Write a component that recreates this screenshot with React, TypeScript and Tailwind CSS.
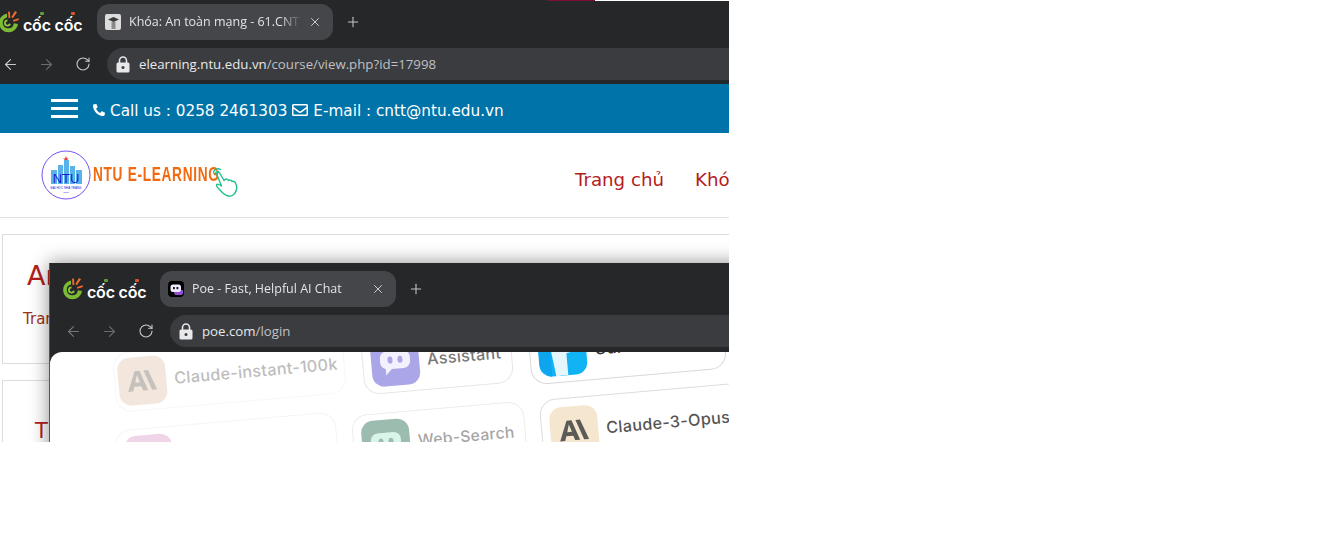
import { FaPhone, FaRegEnvelope } from 'react-icons/fa';
import { ArrowLeft, ArrowRight, Plus, RotateCw, X } from 'lucide-react';

const uiFont = "font-['Open_Sans','Noto_Sans',sans-serif]";
const pageFont = "font-['DejaVu_Sans',sans-serif]";

function CocCocLogo() {
  return (
    <div className="flex items-center">
      <svg width="22" height="22" viewBox="0 0 22 22" className="-ml-[1px] shrink-0">
        <path d="M10 2.500A9.500 9.500 0 1 0 21 13l-4.200-.8A5.500 5.500 0 1 1 10 6.500z" fill="#7cbc35" />
        <path d="M10.500 8.500a3.500 3.500 0 1 0 3.400 4.400l-1.800-.3a1.700 1.700 0 1 1-1.600-2.300z" fill="#8cc63f" />
        <path d="M11 0.500l2 .2.300 6-1.800.5z" fill="#ef6a2c" />
        <path d="M18 0l2 1.200-4.200 6-1.500-1.200z" fill="#ef6a2c" />
        <path d="M16 9l5.500-1.800.5 1.800-5.600 1.700z" fill="#ef6a2c" />
      </svg>
      <span className="relative mt-[5px] ml-[4px] text-[16px] leading-none font-semibold tracking-[-0.2px] whitespace-nowrap text-white font-['Inter',sans-serif]">
        cốc cốc
        <span className="absolute -top-[5px] left-[17px] h-[3px] w-[4px] rounded-[1px] bg-[#5f9e35]" />
        <span className="absolute -top-[5px] left-[48px] h-[3px] w-[4px] rounded-[1px] bg-[#d9562a]" />
      </span>
    </div>
  );
}

function LockIcon() {
  return (
    <svg width="14" height="17" viewBox="0 0 14 17" className="shrink-0">
      <path d="M3.500 7V4.500a3.500 3.500 0 0 1 7 0V7" fill="none" stroke="#e8e8ea" strokeWidth="1.600" />
      <path d="M2 6.500h10a1.500 1.500 0 0 1 1.500 1.500v7a1.500 1.500 0 0 1-1.500 1.500H2A1.500 1.500 0 0 1 .5 15V8A1.500 1.500 0 0 1 2 6.500z" fill="#e8e8ea" />
      <circle cx="7" cy="11.500" r="1.500" fill="#3b3c40" />
    </svg>
  );
}

function ChromeBar({
  logoClass,
  navClass,
  title,
  favicon,
  host,
  path,
  backDim,
}: {
  logoClass: string;
  navClass: string;
  title: string;
  favicon: React.ReactNode;
  host: string;
  path: string;
  backDim: boolean;
}) {
  return (
    <div className={`bg-[#262729] ${uiFont}`}>
      <div className="flex h-[48px] items-start pt-[4px]">
        <div className={`flex h-[36px] items-center ${logoClass}`}>
          <CocCocLogo />
        </div>
        <div className="flex h-[36px] w-[236px] shrink-0 items-center rounded-[12px] bg-[#45464a] pr-[11px] pl-[8px]">
          {favicon}
          <span className="ml-[8px] w-[172px] overflow-hidden text-[12.5px] whitespace-nowrap text-[#e3e3e6] [mask-image:linear-gradient(to_right,black_88%,transparent_100%)]">
            {title}
          </span>
          <X size={14} strokeWidth={1.6} className="ml-auto text-[#d5d5d8]" />
        </div>
        <div className="flex h-[36px] items-center">
          <Plus size={16} strokeWidth={1.6} className="ml-[12px] text-[#c4c5c8]" />
        </div>
      </div>
      <div className="flex h-[32px] items-center">
        <div className={`flex shrink-0 items-center ${navClass}`}>
          <ArrowLeft size={17} strokeWidth={1.6} className={backDim ? 'ml-[15px] text-[#77787b]' : 'ml-[2px] text-[#c9cacc]'} />
          <ArrowRight size={17} strokeWidth={1.6} className="ml-[19px] text-[#6c6d70]" />
          <RotateCw size={16} strokeWidth={1.6} className="ml-[20px] text-[#c9cacc]" />
        </div>
        <div className="flex h-[32px] flex-1 items-center rounded-l-[16px] bg-[#3b3c40] pl-[9px]">
          <LockIcon />
          <span className="mt-[1px] ml-[9px] text-[13.25px] whitespace-nowrap text-[#bfc0c3]">
            <span className="text-[#e8e8ea]">{host}</span>
            {path}
          </span>
        </div>
      </div>
    </div>
  );
}

function CourseFavicon() {
  return (
    <div className="flex h-[16px] w-[16px] shrink-0 items-center justify-center rounded-[2px] bg-[#dcdcdc]">
      <svg width="13" height="13" viewBox="0 0 13 13">
        <path d="M1 3.500L6.500 1 12 3.500 6.500 6z" fill="#3a3a3a" />
        <path d="M4.500 6h4v7h-4z" fill="#8a8a8a" />
      </svg>
    </div>
  );
}

function PoeFavicon() {
  return (
    <div className="flex h-[16px] w-[16px] shrink-0 items-center justify-center rounded-[4px] bg-black">
      <svg width="13" height="11" viewBox="0 0 13 11">
        <path d="M3 6h10v3a2 2 0 0 1-2 2H5z" fill="#8d4fd0" />
        <rect x="0.500" y="0.500" width="10.500" height="7.500" rx="2.500" fill="#efeaff" />
        <rect x="3" y="3" width="1.800" height="2.200" fill="#111" />
        <rect x="6.500" y="3" width="1.800" height="2.200" fill="#111" />
      </svg>
    </div>
  );
}

function Logo() {
  return (
    <div className="relative flex items-center">
      <svg width="50" height="50" viewBox="0 0 50 50" className="shrink-0">
        <circle cx="25" cy="25" r="24" fill="white" stroke="#6a3df0" strokeWidth="0.9" />
        <path d="M25 6l1 2.400h2l-1.700 1.400.7 2.200-2-1.300-2 1.300.7-2.200L22 8.400h2z" fill="#e5413a" />
        <rect x="10" y="20" width="6" height="14" fill="#58b4e8" />
        <rect x="17" y="15" width="5" height="19" fill="#58b4e8" />
        <rect x="23" y="10" width="5" height="24" fill="#58b4e8" />
        <rect x="29" y="16" width="5" height="18" fill="#58b4e8" />
        <rect x="35" y="20" width="6" height="14" fill="#58b4e8" />
        <text x="25" y="33" textAnchor="middle" fontSize="13" fontFamily="Liberation Sans" fill="#2316d8">
          NTU
        </text>
        <text x="25" y="38.500" textAnchor="middle" fontSize="3" fontFamily="Liberation Sans" fill="#2316d8">
          ĐẠI HỌC NHA TRANG
        </text>
        <text x="25" y="43" textAnchor="middle" fontSize="2.500" fontFamily="Liberation Sans" fill="#2316d8">
          1959
        </text>
      </svg>
      <span className="ml-[2px] origin-left scale-x-[0.7] text-[19.5px] leading-none font-bold tracking-[1px] whitespace-nowrap text-[#f26a10] font-['Liberation_Sans',sans-serif]">
        NTU E-LEARNING
      </span>
      {/* hand cursor over the end of the wordmark */}
      <svg
        width="28"
        height="32"
        viewBox="0 0 28 32"
        className="absolute top-[17px] left-[171px]"
        fill="none"
        stroke="#1fbf8f"
        strokeWidth="1.400"
        strokeLinecap="round"
        strokeLinejoin="round"
      >
        <path d="M5 8c-1-2 2-3.500 3-1.500l4 7 1-1c1-1 3-.5 3.500 1 1-1 3-.5 3.500 1 1-.5 3 0 3.500 1.500 1.500 3 1.500 7-.5 10-1.500 2.500-4 3.500-6.500 3-3-.5-6-3-9-6.500-1-1-3.500-3-3-4.500s3-.5 5 1z" />
        <path d="M1.500 6a4.500 4.500 0 0 1 7-3.500" />
        <path d="M3.500 6.500a2.500 2.500 0 0 1 3-2" />
      </svg>
    </div>
  );
}

function PoeCard({
  pos,
  name,
  iconBg,
  textClass,
  borderClass,
  children,
}: {
  pos: string;
  name: string;
  iconBg: string;
  textClass: string;
  borderClass: string;
  children?: React.ReactNode;
}) {
  return (
    <div className={`absolute flex -rotate-[5deg] items-center rounded-[16px] border bg-white ${pos} ${borderClass}`}>
      <div className={`flex h-[48px] w-[48px] shrink-0 items-center justify-center overflow-hidden rounded-[12px] ${iconBg}`}>{children}</div>
      <span className={`ml-[8px] font-medium tracking-[0.3px] whitespace-nowrap font-['Inter',sans-serif] ${textClass}`}>{name}</span>
    </div>
  );
}

function AnthropicMark({ color }: { color: string }) {
  return (
    <svg width="32" height="24" viewBox="0 0 32 24" fill={color}>
      <path d="M9 2h5l7 20h-5l-1.500-4.500H7.500L6 22H1zm-.200 11.500h4.700L11 6z" />
      <path d="M18 2h4.500l7.500 20h-5z" />
    </svg>
  );
}

function BotMark({ fill, eye }: { fill: string; eye: string }) {
  return (
    <svg width="36" height="36" viewBox="0 0 36 36">
      <path d="M10 7h16a7 7 0 0 1 7 7v4a7 7 0 0 1-7 7H14l-6 6v-6.500A7 7 0 0 1 3 18v-4a7 7 0 0 1 7-7z" fill={fill} />
      <ellipse cx="13" cy="16" rx="2.500" ry="3.500" fill={eye} />
      <ellipse cx="23" cy="16" rx="2.500" ry="3.500" fill={eye} />
    </svg>
  );
}

function PoeWindow() {
  return (
    <div className="absolute top-[263px] left-[49px] h-[300px] w-[700px] border-l border-[#55565a] bg-[#262729] pt-[4px] shadow-[0_0_18px_rgba(0,0,0,0.45)]">
      <ChromeBar
        logoClass="ml-[12px] w-[98px] shrink-0"
        navClass="w-[120px]"
        title="Poe - Fast, Helpful AI Chat"
        favicon={<PoeFavicon />}
        host="poe.com"
        path="/login"
        backDim
      />
      <div className="mt-[5px] h-[100px] overflow-hidden rounded-tl-[12px] bg-white">
        <div className="relative h-[100px] w-[680px]">
          <PoeCard
            pos="-top-[9px] left-[64px] h-[60px] w-[231px] pl-[3px]"
            name="Claude-instant-100k"
            iconBg="bg-[#f3e6dc]"
            textClass="text-[16.2px] text-[#bdbdbd]"
            borderClass="border-[#f7f7f7]"
          >
            <AnthropicMark color="#c5c2bd" />
          </PoeCard>
          <PoeCard
            pos="-top-[25px] left-[312px] h-[62px] w-[150px] pl-[8px]"
            name="Assistant"
            iconBg="bg-[#aaa6e8]"
            textClass="text-[16.2px] text-[#777]"
            borderClass="border-[#e6e6e6]"
          >
            <BotMark fill="#f2f1fd" eye="#aaa6e8" />
          </PoeCard>
          <PoeCard
            pos="-top-[37px] left-[479px] h-[62px] w-[196px] pl-[8px]"
            name="Gui"
            iconBg="bg-[#12b3f5]"
            textClass="text-[16.2px] text-[#333]"
            borderClass="border-[#d8d8d8]"
          >
            <svg width="48" height="48" viewBox="0 0 48 48">
              <path d="M0 0h12v48H10C4 44 0 40 0 34z" fill="#0da5ee" />
              <path d="M10 0h28v24l-10 2v22H16z" fill="#e6f6fd" />
            </svg>
          </PoeCard>
          <PoeCard
            pos="top-[69px] left-[66px] h-[62px] w-[222px] pl-[8px]"
            name=""
            iconBg="bg-[#f0d4e8]"
            textClass="text-[16.2px] text-[#bbb]"
            borderClass="border-[#f4f4f4]"
          />
          <PoeCard
            pos="top-[56px] left-[303px] h-[62px] w-[173px] pl-[8px]"
            name="Web-Search"
            iconBg="bg-[#9cbcb0]"
            textClass="text-[15.7px] text-[#a5a5a5]"
            borderClass="border-[#ececec]"
          >
            <BotMark fill="#d9f5ea" eye="#9cbcb0" />
          </PoeCard>
          <PoeCard
            pos="top-[38px] left-[491px] h-[66px] w-[230px] pl-[8px]"
            name="Claude-3-Opus"
            iconBg="bg-[#f5e6cf]"
            textClass="text-[16.2px] text-[#555]"
            borderClass="border-[#dcdcdc]"
          >
            <AnthropicMark color="#5c5a57" />
          </PoeCard>
        </div>
      </div>
    </div>
  );
}

export default function App() {
  return (
    <div className="h-[548px] w-[1338px] overflow-hidden bg-white">
      <div className="relative h-[442px] w-[729px] overflow-hidden bg-white">
        {/* strip of another window showing at the very top */}
        <div className="absolute top-0 left-[547px] z-10 h-px w-[48px] bg-[#7a1033]" />
        <div className="absolute top-0 left-[595px] z-10 h-px w-[134px] bg-white" />

        <ChromeBar
          logoClass="-ml-[2px] w-[99px] shrink-0"
          navClass="w-[107px]"
          title="Khóa: An toàn mạng - 61.CNTT"
          favicon={<CourseFavicon />}
          host="elearning.ntu.edu.vn"
          path="/course/view.php?id=17998"
          backDim={false}
        />
        <div className="h-[4px] bg-[#262729]" />

        <div className={`flex h-[49px] items-center bg-[#0073a8] pl-[51px] text-white ${pageFont}`}>
          <div className="flex w-[27px] flex-col gap-[5px]">
            <div className="h-[3px] bg-white" />
            <div className="h-[3px] bg-white" />
            <div className="h-[3px] bg-white" />
          </div>
          <FaPhone size={12} className="mt-[3px] ml-[15px] -scale-x-100" />
          <span className="mt-[6px] ml-[5px] text-[15.25px] whitespace-nowrap">Call us : 0258 2461303</span>
          <FaRegEnvelope size={16} className="mt-[3px] ml-[5px]" />
          <span className="mt-[6px] ml-[5px] text-[15.25px] whitespace-nowrap">E-mail : cntt@ntu.edu.vn</span>
        </div>

        <div className={`flex h-[85px] items-center border-b border-[#e2e2e2] pl-[41px] ${pageFont}`}>
          <div className="w-[534px] shrink-0">
            <Logo />
          </div>
          <span className="mt-[10px] text-[18.2px] whitespace-nowrap text-[#b3201c]">Trang chủ</span>
          <span className="mt-[10px] ml-[31px] text-[18.2px] whitespace-nowrap text-[#b3201c]">Khóa học</span>
        </div>

        <div className={`mt-[16px] ml-[2px] h-[130px] border border-r-0 border-[#dcdcdc] pt-[24px] pl-[24px] ${pageFont}`}>
          <div className="text-[27px] leading-[34px] whitespace-nowrap text-[#b3201c]">An toàn mạng</div>
          <div className="mt-[16px] -ml-[4px] text-[15px] leading-[20px] whitespace-nowrap text-[#a0301c]">Trang chủ</div>
        </div>

        <div className={`mt-[16px] ml-[2px] h-[80px] border border-r-0 border-[#dcdcdc] pt-[35px] pl-[32px] ${pageFont}`}>
          <div className="text-[21px] leading-[30px] whitespace-nowrap text-[#b3201c]">Thông báo</div>
        </div>

        <PoeWindow />
      </div>
    </div>
  );
}
